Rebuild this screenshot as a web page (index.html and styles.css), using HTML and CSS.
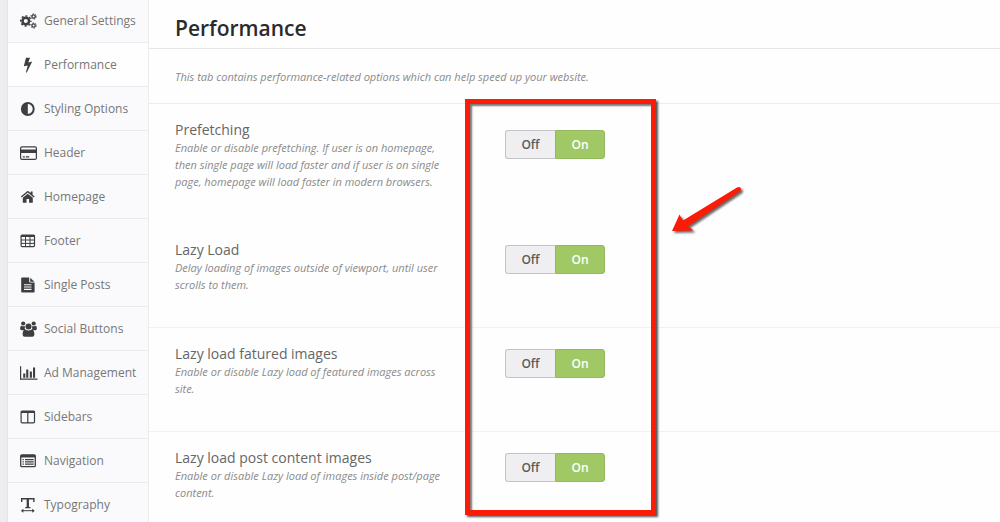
FILE: index.html
```html
<!DOCTYPE html>
<html lang="en">
<head>
<meta charset="utf-8">
<title>Performance</title>
<link rel="stylesheet" href="styles.css">
</head>
<body>
<div class="panel">
  <nav class="sidebar" aria-label="Settings sections">
    <ul class="menu">
      <li><a class="item" href="#general"><svg class="icon" viewBox="0 0 17 16"><g fill="none" stroke="currentColor"><circle cx="5.8" cy="8" r="3.3" stroke-width="2.5"/><circle cx="5.8" cy="8" r="5.1" stroke-width="1.5" stroke-dasharray="2 2.005" stroke-dashoffset="1"/><circle cx="13.6" cy="3.5" r="1.7" stroke-width="1.3"/><circle cx="13.6" cy="3.5" r="2.7" stroke-width="1" stroke-dasharray="1.2 1.627"/><circle cx="13.6" cy="12.5" r="1.7" stroke-width="1.3"/><circle cx="13.6" cy="12.5" r="2.7" stroke-width="1" stroke-dasharray="1.2 1.627"/></g></svg>General Settings</a></li>
      <li><a class="item active" href="#performance" aria-current="page"><svg class="icon" viewBox="0 0 17 16"><path fill="currentColor" d="M6 .8h4L8.3 5.4l3.9-.9-5.4 11h-.9l1.8-7.1-3.9.9z"/></svg>Performance</a></li>
      <li><a class="item" href="#styling"><svg class="icon" viewBox="0 0 17 16"><circle cx="7.8" cy="8" r="5.9" fill="none" stroke="currentColor" stroke-width="2"/><path fill="currentColor" d="M7.8 2v12a6 6 0 0 1 0-12z"/></svg>Styling Options</a></li>
      <li><a class="item" href="#header"><svg class="icon" viewBox="0 0 17 16"><rect x=".6" y="1.8" width="15.8" height="12.6" rx="1.5" fill="none" stroke="currentColor" stroke-width="1.2"/><path fill="currentColor" d="M.5 4.5h16V8H.5zM2.8 11.3h2v1.2h-2zM5.8 11.3h3.4v1.2H5.8z"/></svg>Header</a></li>
      <li><a class="item" href="#homepage"><svg class="icon" viewBox="0 0 17 16"><path fill="currentColor" d="M7.8 4.7l5 4.1v4.4q0 .6-.6.6H9.1v-3.9H6.5v3.9H3.4q-.6 0-.6-.6V8.8z"/><path fill="currentColor" d="M7.1 2.3q.7-.5 1.4 0l2.1 1.8V2.6h2v3.1l2.1 1.8-.9 1.1-6-5-6 5-.9-1.1z"/></svg>Homepage</a></li>
      <li><a class="item" href="#footer"><svg class="icon" viewBox="0 0 17 16"><rect x="1.1" y="2.2" width="13.4" height="11.4" rx="1" fill="none" stroke="currentColor" stroke-width="1.2"/><path fill="none" stroke="currentColor" d="M1 3h14" stroke-width="2"/><path fill="none" stroke="currentColor" d="M1 7h14M1 10.4h14M5.5 3v11M10 3v11"/></svg>Footer</a></li>
      <li><a class="item" href="#single"><svg class="icon" viewBox="0 0 17 16"><path fill="currentColor" fill-rule="evenodd" d="M2 .5h7.2v4.3q0 .8.8.8h4.6V14.700q0 .8-.8.8H2q-.8 0-.8-.8V1.300Q1.200.5 2 .5zM4 7.200v1.100h7.500V7.200zM4 9.500v1.100h7.500V9.500zM4 11.800v1.100h7.500v-1.100z"/><path fill="currentColor" d="M10.200.7l4.200 4h-4.200z"/></svg>Single Posts</a></li>
      <li><a class="item" href="#social"><svg class="icon" viewBox="0 0 17 16"><g fill="currentColor"><circle cx="3.200" cy="2.500" r="2.100"/><circle cx="13.700" cy="2.500" r="2.100"/><path d="M5.300 5.200Q4 8.100 5.700 9.200H1.600Q.1 9.200.1 7.600 0 4.700 1.500 4.700q1.800 1 3.800.5zM11.700 5.200q1.300 2.900-.4 4h4.100q1.500 0 1.500-1.600.1-2.900-1.400-2.900-1.800 1-3.800.5z"/><circle cx="8.500" cy="5.500" r="3"/><path d="M5.300 8.500q3.200 2 6.400 0 2.700.6 2.700 5 0 2.200-2.200 2.200H4.800q-2.200 0-2.200-2.200 0-4.400 2.700-5z"/></g></svg>Social Buttons</a></li>
      <li><a class="item" href="#ads"><svg class="icon" viewBox="0 0 17 16"><path fill="none" stroke="currentColor" d="M.6 1.200v12.900H17.500" stroke-width="1.200"/><path fill="currentColor" d="M3.200 8.500h2.100v4.300H3.200zM6.200 4.500h2.100v8.300H6.200zM9.800 6.500h2.100v6.300H9.800zM13 2.500h2.100v10.300H13z"/></svg>Ad Management</a></li>
      <li><a class="item" href="#sidebars"><svg class="icon" viewBox="0 0 17 16"><rect x="1.100" y="2.200" width="13.400" height="11.600" rx="1" fill="none" stroke="currentColor" stroke-width="1.200"/><path fill="none" stroke="currentColor" d="M1 3h14" stroke-width="2"/><path fill="none" stroke="currentColor" stroke-width="1.200" d="M7.800 3v11"/></svg>Sidebars</a></li>
      <li><a class="item" href="#navigation"><svg class="icon" viewBox="0 0 17 16"><rect x=".7" y="2" width="14.600" height="11.600" rx="1.200" fill="none" stroke="currentColor" stroke-width="1.300"/><path fill="none" stroke="currentColor" d="M.7 3.200h14.600" stroke-width="2.600"/><path fill="none" stroke="currentColor" stroke-width="1.200" d="M2.500 6.600h1.300M5 6.600h8.700M2.500 8.900h1.300M5 8.900h8.700M2.500 11.200h1.300M5 11.200h8.700"/></svg>Navigation</a></li>
      <li><a class="item" href="#typography"><svg class="icon" viewBox="0 0 17 16"><g fill="none" stroke="currentColor"><path stroke-width="1.400" d="M1.700 5V1.800h12.200V5M5.200 10.600h5.200"/><path stroke-width="2.300" d="M7.800 1.500v9.200"/><path d="M2 13.700h11.600"/></g><path fill="currentColor" d="M.9 13.700l2.500-2v4zM14.700 13.700l-2.500-2v4z"/></svg>Typography</a></li>
    </ul>
  </nav>

  <main class="content">
    <header class="heading"><h1>Performance</h1></header>
    <p class="intro">This tab contains performance-related options which can help speed up your website.</p>

    <section class="option tall" aria-labelledby="o1">
      <div class="about">
        <h2 id="o1">Prefetching</h2>
        <p>Enable or disable prefetching. If user is on homepage, then single page will load faster and if user is on single page, homepage will load faster in modern browsers.</p>
      </div>
      <div class="toggle" role="group" aria-labelledby="o1"><button type="button" aria-pressed="false">Off</button><button type="button" class="on" aria-pressed="true">On</button></div>
    </section>
    <section class="option ruled" aria-labelledby="o2">
      <div class="about">
        <h2 id="o2">Lazy Load</h2>
        <p>Delay loading of images outside of viewport, until user scrolls to them.</p>
      </div>
      <div class="toggle" role="group" aria-labelledby="o2"><button type="button" aria-pressed="false">Off</button><button type="button" class="on" aria-pressed="true">On</button></div>
    </section>
    <section class="option ruled" aria-labelledby="o3">
      <div class="about">
        <h2 id="o3">Lazy load fatured images</h2>
        <p>Enable or disable Lazy load of featured images across site.</p>
      </div>
      <div class="toggle" role="group" aria-labelledby="o3"><button type="button" aria-pressed="false">Off</button><button type="button" class="on" aria-pressed="true">On</button></div>
    </section>
    <section class="option" aria-labelledby="o4">
      <div class="about">
        <h2 id="o4">Lazy load post content images</h2>
        <p>Enable or disable Lazy load of images inside post/page content.</p>
      </div>
      <div class="toggle" role="group" aria-labelledby="o4"><button type="button" aria-pressed="false">Off</button><button type="button" class="on" aria-pressed="true">On</button></div>
    </section>

    <div class="callout" aria-hidden="true"></div>
    <svg class="arrow" viewBox="0 0 80 56" aria-hidden="true"><path fill="#fb1b06" d="M2 47l7.500-16.500 3.500 6L67 3.400q2.600-1.200 3.800.6 1 2-1 3.600L18 42.200l5.500 4.300z"/></svg>
  </main>
</div>
</body>
</html>
```
FILE: styles.css
```css
* { box-sizing: border-box; }

body {
  margin: 0;
  background: #fefefe;
  font-family: "Open Sans", "Noto Sans", sans-serif;
}

h1, h2, p, ul { margin: 0; padding: 0; }

.panel {
  display: flex;
  height: 100vh;
  overflow: hidden;
  border-left: 7px solid #ededef;
}

.sidebar {
  flex: 0 0 142px;
  background: #fafafc;
  border-left: 1px solid #e4e4e6;
  border-right: 1px solid #ebebed;
}

.menu {
  margin-top: -1px;
  list-style: none;
}

.item {
  display: flex;
  align-items: center;
  gap: 7px;
  height: 44px;
  padding-left: 12px;
  border-bottom: 1px solid #ebebed;
  color: #777;
  font-size: 12px;
  text-decoration: none;
  white-space: nowrap;
}

.item.active { background: #fefefe; }

.icon {
  flex: none;
  width: 17px;
  height: 16px;
  color: #3e3e40;
  overflow: visible;
}

.content {
  position: relative;
  flex: 1;
  min-width: 0;
}

.heading {
  padding: 13px 26px 5px;
  border-bottom: 1px solid #e6e6e6;
}

.heading h1 {
  color: #2a2a2c;
  font-size: 21px;
  font-weight: 600;
  line-height: 30px;
}

.intro,
.about p {
  color: #8a8a8a;
  font-size: 11px;
  font-style: italic;
}

.intro {
  padding: 19px 26px 17px;
  border-bottom: 1px solid #ececec;
  line-height: 18px;
}

.option {
  display: flex;
  align-items: flex-start;
  gap: 54px;
  padding: 17px 26px 34px;
}

.option.ruled { border-bottom: 1px solid #f1f1f1; }

.about { width: 276px; }

.about h2 {
  color: #666;
  font-size: 14px;
  font-weight: 400;
  line-height: 18px;
}

.about p { line-height: 17px; }

.toggle {
  display: flex;
  margin-top: 4px;
}

.option.tall .toggle { margin-top: 9px; }

.toggle button {
  width: 50px;
  height: 29px;
  padding: 0;
  border: 1px solid #c4c4c6;
  border-right: 0;
  border-radius: 3px 0 0 3px;
  background: #efeff1;
  color: #5a5a5c;
  font: 600 12px "Open Sans", "Noto Sans", sans-serif;
}

.toggle .on {
  border: 1px solid #93b860;
  border-radius: 0 3px 3px 0;
  background: #a0c865;
  color: #fff;
}

.callout {
  position: absolute;
  top: 99px;
  left: 316px;
  width: 191px;
  height: 416px;
  border: 5px solid #fb1b06;
  box-shadow: 2px 2px 2px #555, inset 2px 2px 2px #777;
  pointer-events: none;
}

.arrow {
  position: absolute;
  top: 184px;
  left: 521px;
  width: 80px;
  height: 56px;
  filter: drop-shadow(2px 2px 1px #666);
}
```
